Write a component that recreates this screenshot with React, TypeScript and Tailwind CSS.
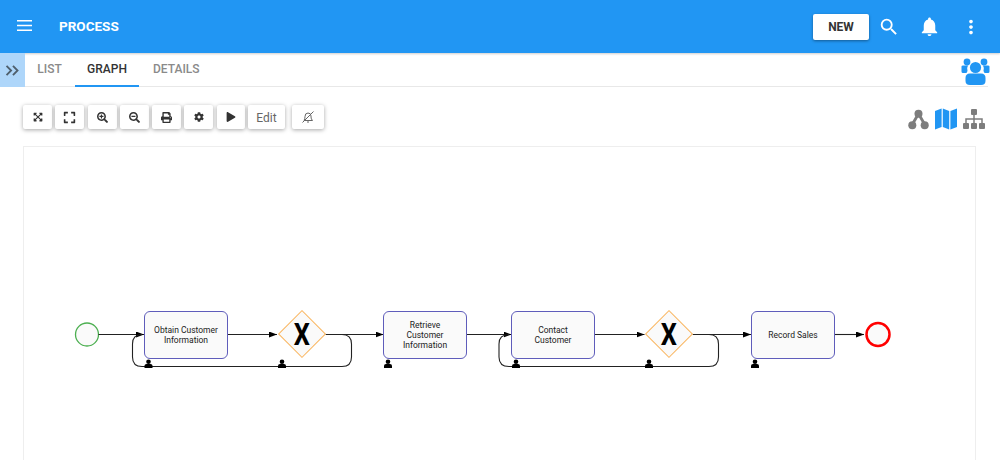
import { ReactNode } from "react";
import { MdMoreVert, MdNotifications, MdSearch } from "react-icons/md";
import {
  FaCog,
  FaExpand,
  FaExpandArrowsAlt,
  FaPlay,
  FaPrint,
  FaSearchMinus,
  FaSearchPlus,
} from "react-icons/fa";

function ToolButton({ className, children }: { className: string; children: ReactNode }) {
  return (
    <button className={`flex h-6 items-center justify-center rounded-[2px] bg-white text-[#333] shadow-[0_1px_4px_rgba(0,0,0,0.35)] ${className}`}>
      {children}
    </button>
  );
}

function Task({ left, label }: { left: string; label: ReactNode }) {
  return (
    <div className={`absolute top-[164px] flex h-[48px] w-[84px] items-center justify-center rounded-[6px] border-[1.5px] border-[#5f5dbb] bg-[#fafafa] text-center text-[8.5px] leading-[10px] text-[#222] ${left}`}>
      {label}
    </div>
  );
}

function Gateway({ left }: { left: string }) {
  return (
    <div className={`absolute top-[163px] flex h-[48px] w-[48px] items-center justify-center ${left}`}>
      <div className="h-[34px] w-[34px] rotate-45 border-[1.5px] border-[#fbb55c] bg-[#fafafa]" />
      <span className="absolute scale-x-[0.82] text-[31px] font-bold leading-none text-black">X</span>
    </div>
  );
}

function Person({ x, y }: { x: number; y: number }) {
  return (
    <g transform={`translate(${x} ${y})`}>
      <circle cx="0" cy="-2.2" r="2.3" fill="#000" />
      <path d="M-4 4 V1.8 Q-4 0 -2 0 H2 Q4 0 4 1.8 V4 Z" fill="#000" />
    </g>
  );
}

export default function App() {
  return (
    <div className="flex h-[460px] w-[1000px] flex-col overflow-hidden bg-white font-['Roboto',sans-serif]">
      <header className="flex h-[53px] shrink-0 items-center bg-[#2196f3] pl-[17px] pr-[18px] text-white shadow-[0_1px_2px_rgba(0,0,0,0.2)]">
        <svg width="15" height="11" viewBox="0 0 15 11" className="mt-[-2px]">
          <path d="M0 .75 H15 M0 5.5 H15 M0 10.25 H15" stroke="#fff" strokeWidth="1.3" />
        </svg>
        <h1 className="ml-[27px] text-[13.5px] font-bold">PROCESS</h1>
        <button className="ml-auto h-[26px] w-14 rounded-[2px] bg-white text-[12px] font-bold text-[#333] shadow-[0_1px_3px_rgba(0,0,0,0.4)]">
          NEW
        </button>
        <MdSearch size={22} className="ml-[9px]" />
        <MdNotifications size={23} className="ml-[18px]" />
        <MdMoreVert size={22} className="ml-[19px]" />
      </header>

      <div className="flex h-[34px] shrink-0 pr-3">
        <div className="flex w-[25px] items-center justify-center bg-[#aed6fa]">
          <svg width="15" height="11" viewBox="0 0 16 12" fill="none" stroke="#4f5f6c" strokeWidth="2">
            <path d="M1.5 1 L6.5 6 L1.5 11 M8.5 1 L13.5 6 L8.5 11" />
          </svg>
        </div>
        <nav className="flex flex-1 border-b border-[#e8e8e8] text-[12px] font-medium text-[#8a8a8a]">
          <a className="flex w-[49px] items-center justify-center pb-px">LIST</a>
          <a className="-mb-px ml-px flex w-[64px] items-center justify-center border-b-2 border-[#2196f3] text-[#333]">GRAPH</a>
          <a className="ml-[14px] flex items-center pb-px">DETAILS</a>
          <svg width="29" height="28" viewBox="0 0 29 28" className="ml-auto mr-[-2px] mt-[5px] text-[#2196f3]" fill="currentColor">
            <circle cx="6" cy="4" r="3.4" />
            <circle cx="23" cy="4" r="3.4" />
            <path d="M0.5 8.5 Q0.5 7.5 2 7.5 H7 Q5.5 10 6.5 13 L5.5 15 H2 Q0.5 15 0.5 13.5 Z" />
            <path d="M28.5 8.5 Q28.5 7.5 27 7.5 H22 Q23.5 10 22.5 13 L23.5 15 H27 Q28.5 15 28.5 13.5 Z" />
            <circle cx="14.5" cy="9.5" r="5.6" />
            <path d="M4.5 20 Q4.5 15.5 9 15.5 H20 Q24.5 15.5 24.5 20 V23 Q24.5 27 20 27 H9 Q4.5 27 4.5 23 Z" />
          </svg>
        </nav>
      </div>

      <div className="flex h-[59px] shrink-0 items-start px-[23px] pt-[18px]">
        <div className="flex">
          <ToolButton className="w-[29px]"><FaExpandArrowsAlt size={10} /></ToolButton>
          <ToolButton className="ml-[3px] w-[29px]"><FaExpand size={13} /></ToolButton>
          <ToolButton className="ml-1 w-[29px]"><FaSearchPlus size={11} /></ToolButton>
          <ToolButton className="ml-[3px] w-[29px]"><FaSearchMinus size={11} /></ToolButton>
          <ToolButton className="ml-[3px] w-[29px]"><FaPrint size={11} /></ToolButton>
          <ToolButton className="ml-[3px] w-[29px]"><FaCog size={10} /></ToolButton>
          <ToolButton className="ml-1 w-[28px]"><FaPlay size={10} /></ToolButton>
          <ToolButton className="ml-[3px] w-[37px] pt-px text-[12px] text-[#666]">Edit</ToolButton>
          <ToolButton className="ml-[7px] w-[32px] text-[#666]">
            <svg width="14" height="14" viewBox="0 0 14 14" fill="none" stroke="currentColor" strokeWidth="1">
              <path d="M3 10.5 Q4 9 4 6.5 Q4 3 7 3 Q10 3 10 6 V7 Q10 9 11.5 10.5 Z" />
              <path d="M6 12 H8" />
              <path d="M1.5 12.5 L12.5 1.5" />
            </svg>
          </ToolButton>
        </div>
        <div className="ml-auto mr-[-8px] mt-[3px] flex items-center gap-[6px]">
          <svg width="21" height="21" viewBox="0 0 22 22" className="text-[#7d7d7d]">
            <path d="M11 5 L4 17 M11 5 L18 17" stroke="currentColor" strokeWidth="3" />
            <circle cx="11" cy="5" r="4.2" fill="currentColor" />
            <circle cx="4.5" cy="17" r="4.2" fill="currentColor" />
            <circle cx="17.5" cy="17" r="4.2" fill="currentColor" />
          </svg>
          <svg width="22" height="22" viewBox="0 0 22 22" fill="#2196f3">
            <path d="M0 3 L6.6 0.5 V19 L0 21.5 Z" />
            <path d="M7.8 0.5 L14.2 3 V21.5 L7.8 19 Z" />
            <path d="M15.4 3 L22 0.5 V19 L15.4 21.5 Z" />
          </svg>
          <svg width="22" height="20" viewBox="0 0 22 20" fill="#7d7d7d">
            <rect x="8" y="0" width="6" height="6" rx="1" />
            <rect x="0" y="14" width="6" height="6" rx="1" />
            <rect x="8" y="14" width="6" height="6" rx="1" />
            <rect x="16" y="14" width="6" height="6" rx="1" />
            <path d="M11 6 V14 M3 14 V10 H19 V14" fill="none" stroke="#7d7d7d" strokeWidth="1.5" />
          </svg>
        </div>
      </div>

      <main className="relative mx-[23px] w-[953px] flex-1 border border-[#eeeeee] border-b-0">
        <svg width="953" height="320" className="absolute left-[-1px] top-[-1px]" fill="none">
          <defs>
            <marker id="arrow" markerWidth="8" markerHeight="6" refX="8" refY="3" orient="auto" markerUnits="userSpaceOnUse">
              <path d="M0 0 L8 3 L0 6 Z" fill="#000" />
            </marker>
          </defs>
          <g stroke="#222" strokeWidth="1.1">
            <circle cx="64" cy="188.5" r="11.5" stroke="#4caf50" fill="#fafafa" strokeWidth="1.3" />
            <path d="M75.5 188.5 H121" markerEnd="url(#arrow)" />
            <path d="M204.5 188.5 H254" markerEnd="url(#arrow)" />
            <path d="M302 188.5 H319 Q328.5 188.5 328.5 198 V211 Q328.5 220.5 319 220.5 H119 Q109.5 220.5 109.5 211 V198 Q109.5 188.5 119 188.5" />
            <path d="M302 188.5 H360.5" markerEnd="url(#arrow)" />
            <path d="M443.5 188.5 H488.5" markerEnd="url(#arrow)" />
            <path d="M571.5 188.5 H621.5" markerEnd="url(#arrow)" />
            <path d="M669.5 188.5 H686 Q695.5 188.5 695.5 198 V211 Q695.5 220.5 686 220.5 H486 Q476 220.5 476 211 V198 Q476 188.5 486 188.5" />
            <path d="M669.5 188.5 H728" markerEnd="url(#arrow)" />
            <path d="M811 188.5 H841" markerEnd="url(#arrow)" />
            <circle cx="855" cy="188.5" r="11.5" stroke="#ff0000" strokeWidth="2.5" fill="#fafafa" />
          </g>
          <Person x={125.5} y={218} />
          <Person x={259} y={218} />
          <Person x={365} y={218} />
          <Person x={493} y={218} />
          <Person x={626} y={218} />
          <Person x={732} y={218} />
        </svg>
        <Task left="left-[120px]" label={<>Obtain Customer<br />Information</>} />
        <Gateway left="left-[254px]" />
        <Task left="left-[359px]" label={<>Retrieve<br />Customer<br />Information</>} />
        <Task left="left-[487px]" label={<>Contact<br />Customer</>} />
        <Gateway left="left-[621px]" />
        <Task left="left-[727px]" label="Record Sales" />
      </main>
    </div>
  );
}
